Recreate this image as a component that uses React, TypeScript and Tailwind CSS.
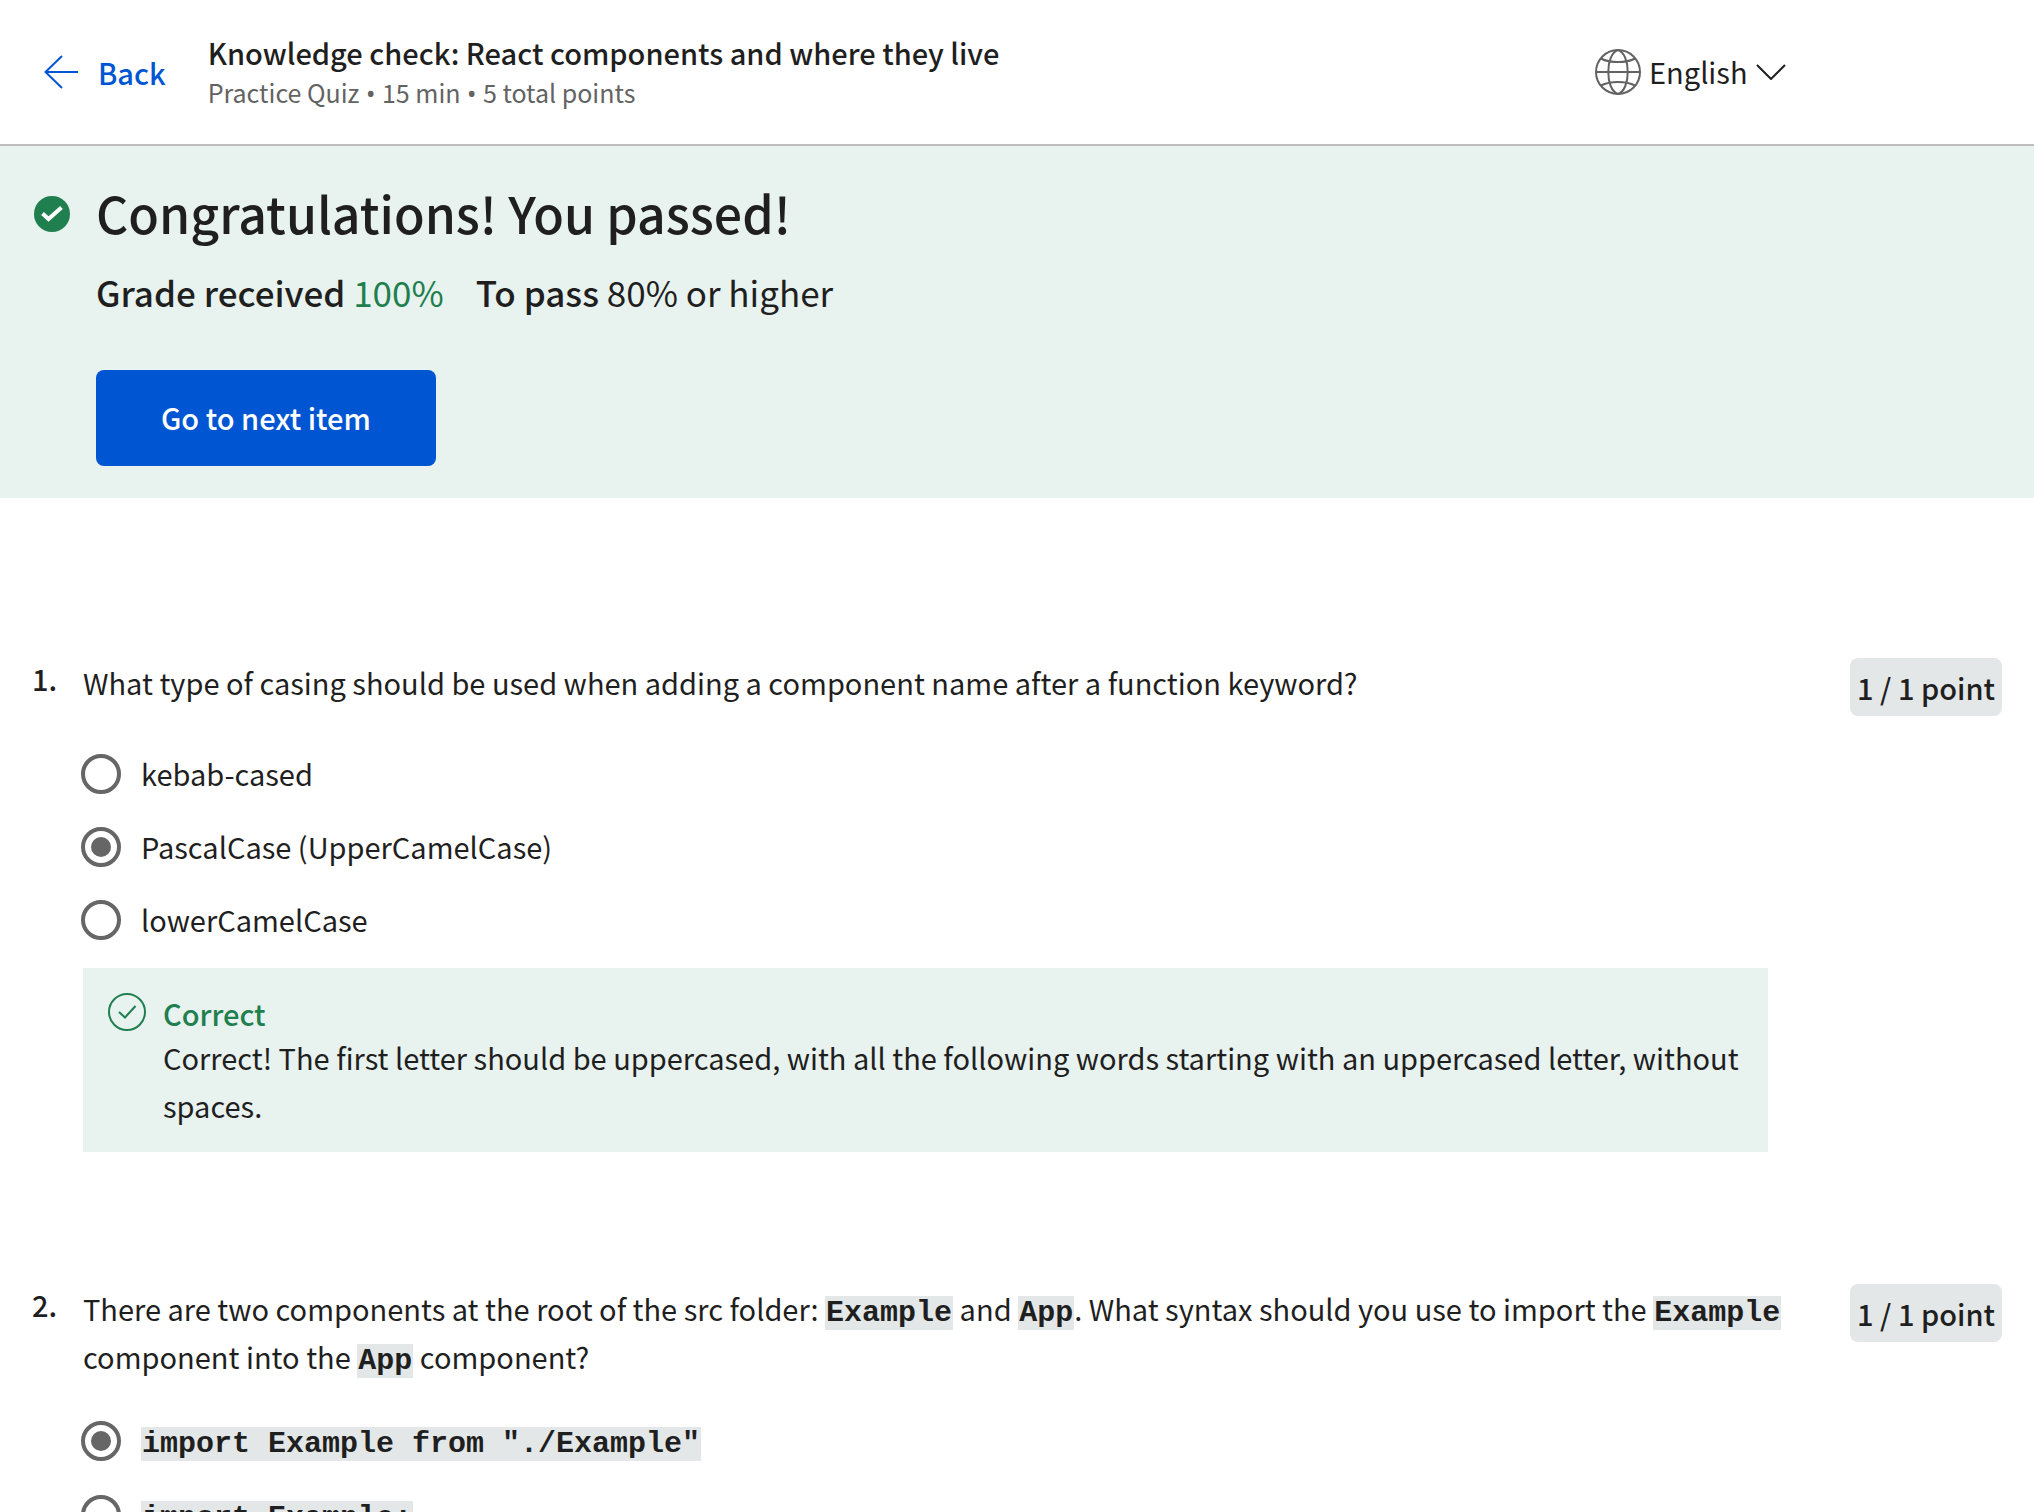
import type { ReactNode } from "react";

type Option = { id: string; label: ReactNode; checked?: boolean };

function Code({ children }: { children: ReactNode }) {
  return (
    <code className="bg-[#e3e7e8] px-px font-['Liberation_Mono',monospace] text-[30px] leading-none font-bold">
      {children}
    </code>
  );
}

function Dot() {
  return <span className="font-['Noto_Sans',sans-serif]"> • </span>;
}

function BackArrow() {
  return (
    <svg className="h-[34px] w-[34px]" viewBox="0 0 34 34" fill="none" stroke="currentColor" strokeWidth="2" aria-hidden="true">
      <path d="M34 17H1.5M18 1 1.5 17 18 33" />
    </svg>
  );
}

function Globe() {
  return (
    <svg className="h-[46px] w-[46px] text-[#636363]" viewBox="0 0 46 46" fill="none" stroke="currentColor" strokeWidth="2" aria-hidden="true">
      <circle cx="23" cy="23" r="22" />
      <path d="M1 23h44" />
      <path d="M23 1C10 5 10 41 23 45C36 41 36 5 23 1Z" />
      <path d="M6 9.500C15 14.300 31 14.300 40 9.500M6 36.500C15 31.700 31 31.700 40 36.500" />
    </svg>
  );
}

function Chevron() {
  return (
    <svg className="h-4 w-[30px]" viewBox="0 0 30 16" fill="none" stroke="currentColor" strokeWidth="2" aria-hidden="true">
      <path d="M1 1l14 14L29 1" />
    </svg>
  );
}

function PassedIcon() {
  return (
    <svg className="mt-3.5 h-9 w-9 shrink-0" viewBox="0 0 36 36" fill="none" aria-hidden="true">
      <circle cx="18" cy="18" r="18" fill="#1f7f4f" />
      <path d="M8.500 17.500l6 5.500L27.500 11.500" stroke="#fff" strokeWidth="4" />
    </svg>
  );
}

function CorrectIcon() {
  return (
    <svg className="h-[38px] w-[38px] shrink-0 text-[#1f7f4f]" viewBox="0 0 38 38" fill="none" stroke="currentColor" strokeWidth="2" aria-hidden="true">
      <circle cx="19" cy="19" r="18" />
      <path d="M11 19l6 5.500L27.500 13" />
    </svg>
  );
}

function Question({
  number,
  prompt,
  options,
  compact,
  children,
}: {
  number: number;
  prompt: ReactNode;
  options: Option[];
  compact?: boolean;
  children?: ReactNode;
}) {
  return (
    <section className="flex items-start px-8" aria-labelledby={`prompt-${number}`}>
      <h3 className="w-[51px] shrink-0 text-[29px] leading-[40px] font-medium">{number}.</h3>
      <div className="min-w-0 flex-1">
        <p id={`prompt-${number}`} className="-mr-5 text-[29px] leading-[48px]">
          {prompt}
        </p>
        <div
          role="radiogroup"
          aria-labelledby={`prompt-${number}`}
          className={compact ? "-ml-0.5 flex flex-col gap-[33px] pt-10" : "-ml-0.5 flex flex-col gap-[33px] pt-12"}
        >
          {options.map((option) => (
            <label key={option.id} htmlFor={option.id} className="flex items-center gap-5 text-[29px] leading-[38px]">
              <input
                id={option.id}
                type="radio"
                name={`question-${number}`}
                defaultChecked={option.checked}
                className="grid size-10 shrink-0 appearance-none place-content-center rounded-full border-4 border-[#666] bg-white before:size-5 before:rounded-full checked:before:bg-[#666]"
              />
              <span className="pb-0.5">{option.label}</span>
            </label>
          ))}
        </div>
        {children}
      </div>
      <div className="ml-[82px] shrink-0 rounded-lg bg-[#e3e7e8] px-[7px] text-[29px] leading-[58px] font-medium">1 / 1 point</div>
    </section>
  );
}

export default function App() {
  return (
    <div className="flex h-screen flex-col bg-white font-['Noto_Sans_CJK_SC',sans-serif] text-[#1f1f1f]">
      <header className="flex h-[146px] shrink-0 items-center border-b-2 border-[#bdbdbd] pr-[248px] pl-11">
        <a href="#back" className="flex items-center gap-5 text-[29px] leading-[40px] font-medium text-[#0056d2]">
          <BackArrow />
          Back
        </a>
        <div className="ml-[42px]">
          <h1 className="text-[29px] leading-[40px] font-medium">Knowledge check: React components and where they live</h1>
          <p className="text-[25px] leading-[40px] text-[#636363]">
            Practice Quiz
            <Dot />
            15 min
            <Dot />5 total points
          </p>
        </div>
        <div className="ml-auto flex items-center">
          <Globe />
          <select aria-label="Language" className="ml-2 appearance-none bg-transparent pb-0.5 text-[29px] leading-[40px]">
            <option>English</option>
          </select>
          <span className="ml-2">
            <Chevron />
          </span>
        </div>
      </header>

      <main className="flex-1 overflow-y-auto [scrollbar-width:none]">
        <section className="flex gap-[26px] bg-[#e8f2ee] px-[34px] pt-9 pb-8">
          <PassedIcon />
          <div>
            <h2 className="text-[50px] leading-[60px] font-medium">Congratulations! You passed!</h2>
            <p className="mt-5 flex gap-8 text-[35px] leading-[60px]">
              <span>
                <strong className="font-medium">Grade received</strong> <span className="text-[#1f7f4f]">100%</span>
              </span>
              <span>
                <strong className="font-medium">To pass</strong> 80% or higher
              </span>
            </p>
            <button type="button" className="mt-12 h-24 rounded-lg bg-[#0056d2] px-[65px] text-[29px] font-medium text-white">
              Go to next item
            </button>
          </div>
        </section>

        <div className="flex flex-col gap-[132px] pt-40">
          <Question
            number={1}
            prompt="What type of casing should be used when adding a component name after a function keyword?"
            options={[
              { id: "kebab", label: "kebab-cased" },
              { id: "pascal", label: "PascalCase (UpperCamelCase)", checked: true },
              { id: "lower", label: "lowerCamelCase" },
            ]}
          >
            <div className="mt-7 flex items-start gap-[17px] bg-[#e8f2ee] px-[25px] pt-[25px] pb-[23px]">
              <CorrectIcon />
              <div>
                <p className="text-[29px] leading-[40px] font-medium text-[#1f7f4f]">Correct</p>
                <p className="text-[29px] leading-[48px]">
                  Correct! The first letter should be uppercased, with all the following words starting with an uppercased
                  letter, without spaces.
                </p>
              </div>
            </div>
          </Question>

          <Question
            number={2}
            compact
            prompt={
              <>
                There are two components at the root of the src folder: <Code>Example</Code> and <Code>App</Code>. What
                syntax should you use to import the <Code>Example</Code> component into the <Code>App</Code> component?
              </>
            }
            options={[
              { id: "from", label: <Code>import Example from "./Example"</Code>, checked: true },
              { id: "bare", label: <Code>import Example;</Code> },
            ]}
          />
        </div>
      </main>
    </div>
  );
}
